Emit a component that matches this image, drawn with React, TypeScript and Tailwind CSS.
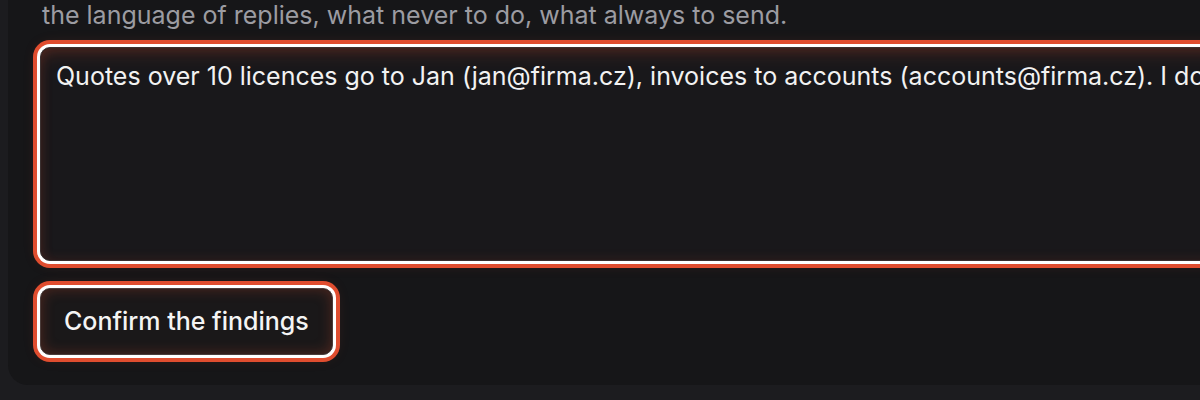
import React from 'react';

export default function App() {
  return (
    <div className="w-[1200px] h-[400px] overflow-hidden bg-[#1c1c1f] font-['Inter','Liberation_Sans',sans-serif]">
      <div className="ml-2 w-[2000px] rounded-b-[20px] bg-[#161618] px-8 pb-[30px]">
        <p className="-mt-[3px] pl-0.5 text-[25px] leading-[36px] text-[#9c9ca2]">
          the language of replies, what never to do, what always to send.
        </p>

        <div className="mt-[14px] flex flex-col items-start gap-[27px]">
          <textarea
            readOnly
            defaultValue="Quotes over 10 licences go to Jan (jan@firma.cz), invoices to accounts (accounts@firma.cz). I do not send price lists without approval."
            className="h-[214px] w-full resize-none rounded-[10px] border border-[#3a3030] bg-[#19181b] px-[15px] py-[11px] text-[25px] leading-[35px] text-[#f2f2f2] outline-none shadow-[inset_0_10px_18px_-6px_rgba(224,80,47,0.22),inset_0_0_12px_rgba(224,80,47,0.14),0_0_0_3px_#ffffff,0_0_0_7px_#e04d2f,0_0_16px_rgba(224,80,47,0.25)]"
          />

          <button className="rounded-[10px] border border-[#4a3c3a] bg-[#1a1819] px-[23px] py-[15px] text-[25px] font-medium leading-[35px] text-[#f4f4f4] shadow-[inset_0_0_14px_rgba(224,80,47,0.28),0_0_0_3px_#ffffff,0_0_0_7px_#e04d2f,0_0_16px_rgba(224,80,47,0.25)]">
            Confirm the findings
          </button>
        </div>
      </div>
    </div>
  );
}
